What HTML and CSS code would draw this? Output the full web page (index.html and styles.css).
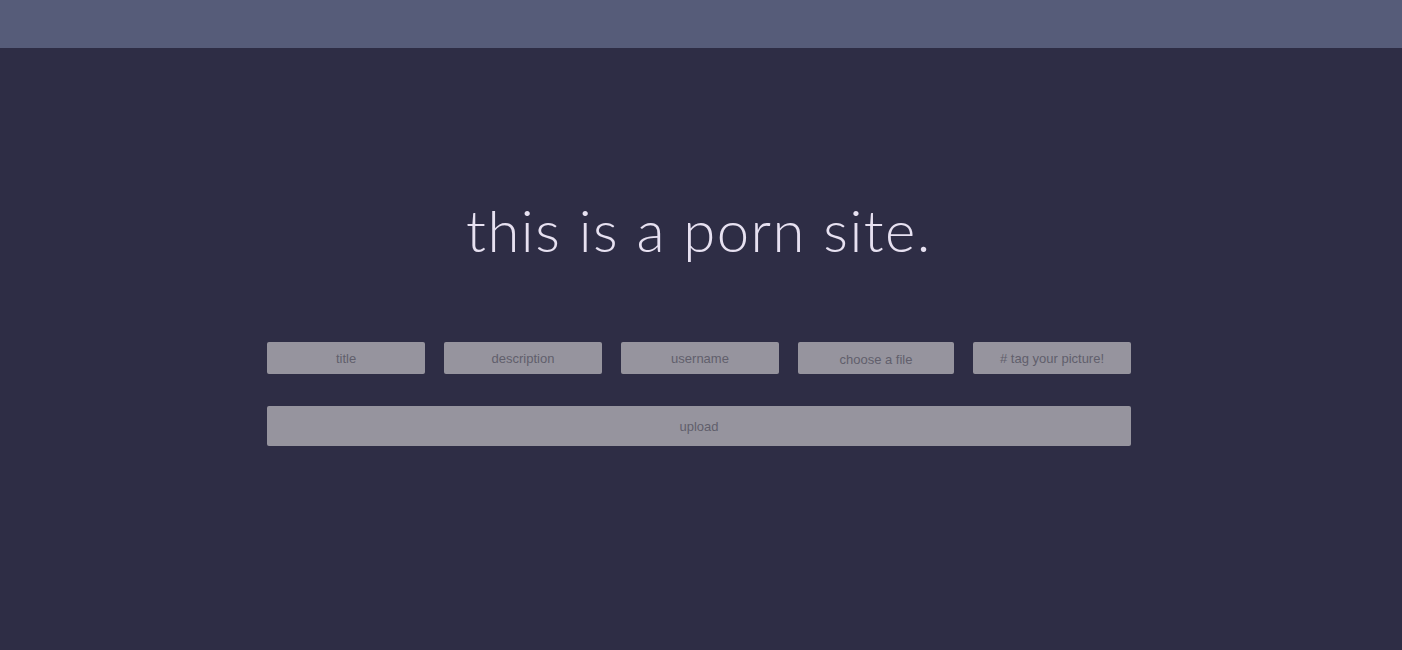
FILE: index.html
```html
<!DOCTYPE html>
<html>
<head>
<meta charset="utf-8">
<link rel="stylesheet" href="styles.css">
</head>
<body>
<header class="topbar"></header>
<main class="page">
  <h1 class="title">this is a porn site.</h1>
  <form class="upload-form">
    <div class="fields">
      <input class="field" type="text" placeholder="title">
      <input class="field" type="text" placeholder="description">
      <input class="field" type="text" placeholder="username">
      <label class="field file-label">choose a file</label>
      <input class="field" type="text" placeholder="# tag your picture!">
    </div>
    <button class="upload-btn" type="button">upload</button>
  </form>
</main>
</body>
</html>
```

FILE: styles.css
```css
* { box-sizing: border-box; }
html, body { margin: 0; height: 100%; }
body {
  background: #2e2d45;
  font-family: "Liberation Sans", Arial, sans-serif;
  overflow: hidden;
}
.topbar {
  height: 48px;
  background: #565c79;
}
.page {
  display: flex;
  flex-direction: column;
  align-items: center;
  padding-right: 4px;
}
.title {
  margin: 142px 0 0;
  height: 152px;
  font-family: "Lato", sans-serif;
  font-weight: 300;
  font-size: 58px;
  letter-spacing: 1.5px;
  color: #e7e1f1;
  line-height: 80px;
}
.upload-form {
  width: 864px;
  display: flex;
  flex-direction: column;
  gap: 32px;
}
.fields {
  display: grid;
  grid-template-columns: 158px 158px 158px 156px 158px;
  gap: 19px;
}
.field {
  height: 32px;
  border: none;
  border-radius: 2px;
  background: #96949e;
  color: #615f6c;
  font-family: "Liberation Sans", Arial, sans-serif;
  font-size: 13px;
  text-align: center;
  outline: none;
  padding: 0;
}
.field::placeholder { color: #615f6c; opacity: 1; }
.file-label {
  display: flex;
  align-items: center;
  justify-content: center;
  padding-top: 2px;
}
.upload-btn {
  height: 40px;
  border: none;
  border-radius: 2px;
  background: #96949e;
  color: #615f6c;
  font-family: "Liberation Sans", Arial, sans-serif;
  font-size: 13px;
  padding: 0;
}
```
